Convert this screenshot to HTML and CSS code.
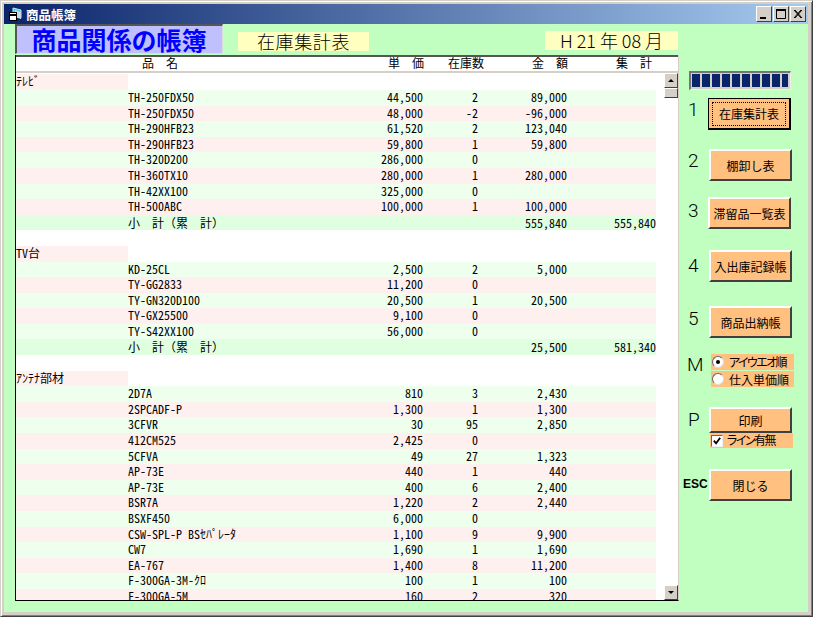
FILE: index.html
```html
<!DOCTYPE html>
<html>
<head>
  <meta charset="UTF-8">
  <title>商品帳簿</title>
  <link rel="stylesheet" href="styles.css">
</head>
<body>
  <div class="window">
    <div class="titlebar">
      <svg class="app-icon" width="14" height="15" viewBox="0 0 14 15">
        <path d="M5 1l8 2v8l-8-2z" fill="#40d0e0" stroke="#c0e8f0"/>
        <path d="M7 3l6 2v7l-6-2z" fill="#d0d8e8"/>
        <rect x="1.5" y="5.5" width="7" height="8" fill="#fff" stroke="#000"/>
        <rect x="1.5" y="7" width="7" height="2" fill="#000"/>
      </svg>
      <span class="title-text">商品帳簿</span>
      <div class="win-buttons">
        <div class="win-btn"><svg width="12" height="10" viewBox="0 0 12 10"><rect x="2" y="8" width="6" height="2" fill="#000"/></svg></div>
        <div class="win-btn"><svg width="12" height="10" viewBox="0 0 12 10"><path d="M1.5 1.5h9v8h-9z" fill="none" stroke="#000"/><rect x="1" y="0" width="10" height="2" fill="#000"/></svg></div>
        <div class="win-btn close"><svg width="12" height="10" viewBox="0 0 12 10"><path d="M2 1l7 8M3 1l7 8M9 1l-7 8M10 1l-7 8" stroke="#000" fill="none"/></svg></div>
      </div>
    </div>

    <div class="client">
      <div class="main">
        <div class="heading">
          <div class="big-title">商品関係の帳簿</div>
          <div class="tag tag-report">在庫集計表</div>
          <div class="tag tag-date">H 21 年 08 月</div>
        </div>

        <div class="panel">
          <div class="list-head">
            <span>品　名</span>
            <span>単　価</span>
            <span>在庫数</span>
            <span>金　額</span>
            <span>集　計</span>
          </div>
          <div class="list-body">
            <div class="rows">
              <div class="row"><span class="group">ﾃﾚﾋﾞ</span></div>
              <div class="row green"><span></span><span>TH-250FDX50</span><span class="num">44,500</span><span class="num">2</span><span class="num">89,000</span></div>
              <div class="row pink"><span></span><span>TH-250FDX50</span><span class="num">48,000</span><span class="num">-2</span><span class="num">-96,000</span></div>
              <div class="row green"><span></span><span>TH-290HFB23</span><span class="num">61,520</span><span class="num">2</span><span class="num">123,040</span></div>
              <div class="row pink"><span></span><span>TH-290HFB23</span><span class="num">59,800</span><span class="num">1</span><span class="num">59,800</span></div>
              <div class="row green"><span></span><span>TH-320D200</span><span class="num">286,000</span><span class="num">0</span></div>
              <div class="row pink"><span></span><span>TH-360TX10</span><span class="num">280,000</span><span class="num">1</span><span class="num">280,000</span></div>
              <div class="row green"><span></span><span>TH-42XX100</span><span class="num">325,000</span><span class="num">0</span></div>
              <div class="row pink"><span></span><span>TH-500ABC</span><span class="num">100,000</span><span class="num">1</span><span class="num">100,000</span></div>
              <div class="row subtotal"><span></span><span>小　計（累　計）</span><span></span><span></span><span class="num">555,840</span><span class="num">555,840</span></div>
              <div class="row"></div>

              <div class="row"><span class="group">TV台</span></div>
              <div class="row green"><span></span><span>KD-25CL</span><span class="num">2,500</span><span class="num">2</span><span class="num">5,000</span></div>
              <div class="row pink"><span></span><span>TY-GG2833</span><span class="num">11,200</span><span class="num">0</span></div>
              <div class="row green"><span></span><span>TY-GN320D100</span><span class="num">20,500</span><span class="num">1</span><span class="num">20,500</span></div>
              <div class="row pink"><span></span><span>TY-GX25500</span><span class="num">9,100</span><span class="num">0</span></div>
              <div class="row green"><span></span><span>TY-S42XX100</span><span class="num">56,000</span><span class="num">0</span></div>
              <div class="row subtotal"><span></span><span>小　計（累　計）</span><span></span><span></span><span class="num">25,500</span><span class="num">581,340</span></div>
              <div class="row"></div>

              <div class="row"><span class="group">ｱﾝﾃﾅ部材</span></div>
              <div class="row green"><span></span><span>2D7A</span><span class="num">810</span><span class="num">3</span><span class="num">2,430</span></div>
              <div class="row pink"><span></span><span>2SPCADF-P</span><span class="num">1,300</span><span class="num">1</span><span class="num">1,300</span></div>
              <div class="row green"><span></span><span>3CFVR</span><span class="num">30</span><span class="num">95</span><span class="num">2,850</span></div>
              <div class="row pink"><span></span><span>412CM525</span><span class="num">2,425</span><span class="num">0</span></div>
              <div class="row green"><span></span><span>5CFVA</span><span class="num">49</span><span class="num">27</span><span class="num">1,323</span></div>
              <div class="row pink"><span></span><span>AP-73E</span><span class="num">440</span><span class="num">1</span><span class="num">440</span></div>
              <div class="row green"><span></span><span>AP-73E</span><span class="num">400</span><span class="num">6</span><span class="num">2,400</span></div>
              <div class="row pink"><span></span><span>BSR7A</span><span class="num">1,220</span><span class="num">2</span><span class="num">2,440</span></div>
              <div class="row green"><span></span><span>BSXF450</span><span class="num">6,000</span><span class="num">0</span></div>
              <div class="row pink"><span></span><span>CSW-SPL-P BSｾﾊﾟﾚｰﾀ</span><span class="num">1,100</span><span class="num">9</span><span class="num">9,900</span></div>
              <div class="row green"><span></span><span>CW7</span><span class="num">1,690</span><span class="num">1</span><span class="num">1,690</span></div>
              <div class="row pink"><span></span><span>EA-767</span><span class="num">1,400</span><span class="num">8</span><span class="num">11,200</span></div>
              <div class="row green"><span></span><span>F-300GA-3M-ｸﾛ</span><span class="num">100</span><span class="num">1</span><span class="num">100</span></div>
              <div class="row pink"><span></span><span>F-300GA-5M</span><span class="num">160</span><span class="num">2</span><span class="num">320</span></div>
            </div>
            <div class="scrollbar">
              <div class="sb-btn"><i class="arrow-up"></i></div>
              <div class="sb-thumb"></div>
              <div class="sb-track"></div>
              <div class="sb-btn"><i class="arrow-down"></i></div>
            </div>
          </div>
        </div>
      </div>

      <div class="side">
        <div class="progress">
          <i></i><i></i><i></i><i></i><i></i><i></i><i></i><i></i><i></i><i class="last"></i>
        </div>

        <div class="side-row row-1">
          <span class="key key-short">1</span>
          <button class="cmd focused"><span>在庫集計表</span></button>
        </div>
        <div class="side-row row-2">
          <span class="key">2</span>
          <button class="cmd">棚卸し表</button>
        </div>
        <div class="side-row row-3">
          <span class="key key-short">3</span>
          <button class="cmd">滞留品一覧表</button>
        </div>
        <div class="side-row row-4">
          <span class="key">4</span>
          <button class="cmd">入出庫記録帳</button>
        </div>
        <div class="side-row row-5">
          <span class="key">5</span>
          <button class="cmd">商品出納帳</button>
        </div>

        <div class="side-row row-m">
          <span class="key key-wide">M</span>
          <div class="options">
            <div class="opt"><i class="radio on"></i><span class="kana">アイウエオ順</span></div>
            <div class="opt"><i class="radio"></i>仕入単価順</div>
          </div>
        </div>

        <div class="side-row row-p">
          <span class="key">P</span>
          <div>
            <button class="cmd cmd-print">印刷</button>
            <div class="opt check-opt">
              <svg class="check" width="13" height="13" viewBox="0 0 11 11"><path d="M2 5l2.5 3L9 2" fill="none" stroke="#000" stroke-width="2"/></svg>
              <span class="kana-check">ライン有無</span>
            </div>
          </div>
        </div>

        <div class="side-row row-esc">
          <span class="key key-esc">ESC</span>
          <button class="cmd">閉じる</button>
        </div>
      </div>
    </div>
  </div>
</body>
</html>
```

FILE: styles.css
```css
body {
  margin: 0;
  font-family: "Noto Sans Mono CJK JP", "Noto Sans CJK JP", "Liberation Mono", monospace;
  font-size: 12px;
  color: #000;
}
.window {
  width: 813px;
  height: 617px;
  box-sizing: border-box;
  padding: 4px 4px 4px 4px;
  background-color: #d4d0c8;
  border-top: 1px solid #d4d0c8;
  border-left: 1px solid #d4d0c8;
  border-right: 1px solid #404040;
  border-bottom: 1px solid #404040;
  box-shadow: inset 1px 1px 0 #fff, inset -1px -1px 0 #808080;
  display: flex;
  flex-direction: column;
}
.titlebar {
  height: 20px;
  margin: -1px 0 0 -1px;
  padding-left: 4px;
  display: flex;
  align-items: center;
  background: linear-gradient(to right, #0a246a, #a6caf0);
  color: white;
}
.app-icon {
  margin-right: 4px;
}
.title-text {
  font-family: "Noto Sans CJK JP", sans-serif;
  font-size: 12.5px;
  font-weight: bold;
}
.win-buttons {
  margin-left: auto;
  margin-right: 2px;
  display: flex;
  gap: 1px;
}
.win-btn {
  width: 16px;
  height: 16px;
  box-sizing: border-box;
  display: flex;
  align-items: center;
  justify-content: center;
  background-color: #d4d0c8;
  border-top: 1px solid #fff;
  border-left: 1px solid #fff;
  border-right: 1px solid #404040;
  border-bottom: 1px solid #404040;
}
.client {
  flex: 1;
  margin-left: -1px;
  background-color: #c0ffc0;
  display: flex;
  padding-left: 11px;
}

/* left part */
.main {
  width: 664px;
}
.heading {
  display: flex;
  height: 31px;
}
.big-title {
  width: 208px;
  height: 30px;
  box-sizing: border-box;
  padding-right: 1px;
  background-color: #c0c0ff;
  border-top: 2px solid #555;
  border-left: 2px solid #555;
  border-right: 1px solid #ddd;
  border-bottom: 1px solid #ddd;
  color: #0000ff;
  font-family: "Noto Sans CJK JP", sans-serif;
  font-size: 25px;
  font-weight: bold;
  line-height: 26px;
  text-align: center;
  white-space: nowrap;
}
.tag {
  background-color: #ffffc0;
  font-family: "Noto Sans CJK JP", sans-serif;
  font-size: 18px;
  font-weight: 300;
  line-height: 19px;
  height: 19px;
  text-align: center;
  white-space: nowrap;
}
.tag-report {
  width: 131px;
  margin: 8px 0 0 15px;
  letter-spacing: 0.6px;
}
.tag-date {
  width: 133px;
  margin: 7px 0 0 176px;
}
.panel {
  height: 546px;
  box-sizing: border-box;
  background-color: white;
  border-left: 1px solid #000;
  border-bottom: 1px solid #000;
  border-right: 1px solid #d4d0c8;
  display: flex;
  flex-direction: column;
}
.list-head {
  height: 18px;
  box-sizing: border-box;
  border-top: 2px solid #555;
  border-bottom: 2px solid #d4d0c8;
  padding-left: 126px;
  display: grid;
  grid-template-columns: 36px 246px 60px 84px 84px;
  line-height: 11px;
  white-space: pre;
}
.list-head span:not(:first-child) {
  text-align: right;
}
.list-body {
  flex: 1;
  display: flex;
  justify-content: space-between;
  overflow: hidden;
}
.rows {
  width: 640px;
  margin-top: 1.4px;
}
.row {
  height: 15.6px;
  line-height: 14px;
  display: grid;
  grid-template-columns: 112px 183px 112px 55px 89px 89px;
  white-space: nowrap;
}
.green {
  background-color: #eeffee;
}
.pink {
  background-color: #fff0f0;
}
.subtotal {
  background-color: #e0ffe0;
  line-height: 16px;
}
.group {
  background-color: #fff0f0;
}
.num {
  text-align: right;
}

/* scrollbar */
.scrollbar {
  width: 14px;
  display: flex;
  flex-direction: column;
}
.sb-btn,
.sb-thumb {
  box-sizing: border-box;
  background-color: #d4d0c8;
  border-top: 1px solid #fff;
  border-left: 1px solid #fff;
  border-right: 1px solid #404040;
  border-bottom: 1px solid #404040;
}
.sb-btn {
  height: 15px;
  display: flex;
  align-items: center;
  justify-content: center;
}
.sb-thumb {
  height: 10px;
}
.sb-track {
  flex: 1;
}
.arrow-up {
  border-left: 3px solid transparent;
  border-right: 3px solid transparent;
  border-bottom: 3px solid #000;
}
.arrow-down {
  border-left: 3px solid transparent;
  border-right: 3px solid transparent;
  border-top: 3px solid #000;
}

/* right part */
.side {
  flex: 1;
  padding: 47px 0 0 4px;
}
.progress {
  width: 102px;
  height: 19px;
  margin-left: 6px;
  box-sizing: border-box;
  background-color: #d4d0c8;
  border-top: 2px solid #777;
  border-left: 2px solid #777;
  border-right: 1px solid #eee;
  border-bottom: 1px solid #eee;
  padding: 1px 1px 2px 1px;
  display: flex;
  gap: 2px;
}
.progress i {
  width: 8px;
  background-color: #0a246a;
}
.progress i.last {
  width: 6px;
}
.side-row {
  display: flex;
}
.row-1 { margin-top: 8px; }
.row-2 { margin-top: 19px; }
.row-3 { margin-top: 16px; }
.row-4 { margin-top: 21px; }
.row-5 { margin-top: 24px; }
.row-m { margin-top: 16px; }
.row-p { margin-top: 20px; }
.row-esc { margin-top: 21px; }
.key {
  width: 21px;
  padding-left: 5px;
  font-family: Roboto, sans-serif;
  font-size: 19px;
  font-weight: 300;
  line-height: 24px;
}
.key-short {
  width: 20px;
}
.key-wide {
  width: 24px;
  padding-left: 4px;
}
.row-3 .key {
  line-height: 28px;
}
.row-4 .key {
  line-height: 32px;
}
.row-5 .key {
  line-height: 26px;
}
.row-m .key {
  line-height: 22px;
}
.row-p .key {
  line-height: 26px;
}
.key-esc {
  width: 26px;
  padding-left: 0;
  font-family: "Liberation Sans", sans-serif;
  font-size: 12px;
  font-weight: bold;
  line-height: 30px;
}
.cmd {
  display: block;
  width: 83px;
  height: 32px;
  padding: 0;
  box-sizing: border-box;
  background-color: #ffc080;
  border-top: 2px solid #fff;
  border-left: 2px solid #fff;
  border-right: 2px solid #404040;
  border-bottom: 2px solid #404040;
  font-family: "Noto Sans CJK JP", sans-serif;
  font-size: 12px;
  color: #000;
  white-space: nowrap;
}
.cmd.focused {
  border: 1px solid #000;
  border-right-width: 2px;
  border-bottom-width: 2px;
  padding: 3px;
}
.cmd.focused span {
  display: block;
  line-height: 22px;
  border: 1px dotted #000;
}
.cmd-print {
  height: 26px;
}
.options {
  display: flex;
  flex-direction: column;
  gap: 1px;
}
.opt {
  width: 83px;
  height: 16px;
  display: flex;
  align-items: center;
  background-color: #ffc080;
  font-family: "Noto Sans CJK JP", sans-serif;
  font-size: 12px;
  font-feature-settings: "palt";
  white-space: nowrap;
}
.kana {
  letter-spacing: -1.6px;
  margin-top: -2px;
}
.kana-check {
  letter-spacing: -1.5px;
  margin-top: -3px;
}
.radio {
  width: 12px;
  height: 12px;
  box-sizing: border-box;
  margin: 0 5px 0 1px;
  border-radius: 50%;
  background-color: white;
  border: 1px solid #666;
  border-right-color: #ddd;
  border-bottom-color: #ddd;
  display: flex;
  align-items: center;
  justify-content: center;
}
.radio.on::after {
  content: "";
  width: 4px;
  height: 4px;
  border-radius: 50%;
  background-color: #000;
}
.check-opt {
  height: 15px;
  margin-left: 1px;
}
.check {
  box-sizing: border-box;
  width: 12px;
  height: 12px;
  margin: 0 4px 0 1px;
  background-color: white;
  border: 1px solid #666;
  border-right-color: #eee;
  border-bottom-color: #eee;
}
```
